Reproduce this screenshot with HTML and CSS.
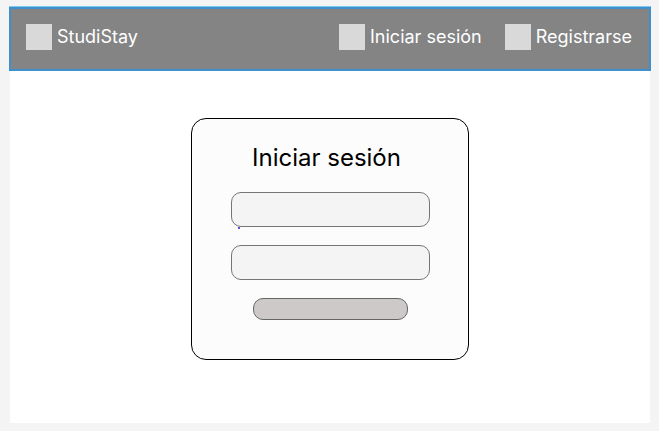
FILE: index.html
```html
<!DOCTYPE html>
<html lang="es">
<head>
<meta charset="utf-8">
<title>StudiStay</title>
<link rel="stylesheet" href="styles.css">
</head>
<body>
<div class="page">
  <header class="topbar">
    <a class="link" href="#"><span class="icon"></span>StudiStay</a>
    <nav class="nav">
      <a class="link" href="#"><span class="icon"></span>Iniciar sesión</a>
      <a class="link" href="#"><span class="icon"></span>Registrarse</a>
    </nav>
  </header>
  <main class="main">
    <form class="card">
      <h1 class="title">Iniciar sesión</h1>
      <div class="field">
        <input class="input" type="text" aria-label="Usuario">
        <span class="dot"></span>
      </div>
      <div class="field">
        <input class="input" type="password" aria-label="Contraseña">
      </div>
      <button class="submit" type="submit" aria-label="Entrar"></button>
    </form>
  </main>
</div>
</body>
</html>
```
FILE: styles.css
```css
* {
  box-sizing: border-box;
}

body {
  margin: 0;
  padding: 7px 8px 8px 9px;
  min-height: 100vh;
  display: flex;
  background: #f4f4f4;
  font-family: Inter, "Liberation Sans", sans-serif;
}

.page {
  flex: 1;
  display: flex;
  flex-direction: column;
  background: linear-gradient(#fff, #fff) center / calc(100% - 2px) 100% no-repeat;
}

.topbar {
  display: flex;
  justify-content: space-between;
  align-items: center;
  height: 64px;
  padding: 0 17px 4px 15px;
  border: 2px solid #3f8fcd;
  background: #848484;
  box-shadow: 0 -1px #7cc8f0;
}

.nav {
  display: flex;
  gap: 23px;
}

.link {
  display: flex;
  align-items: center;
  gap: 5px;
  color: #fff;
  font-size: 18px;
  line-height: 26px;
  text-decoration: none;
}

.icon {
  width: 26px;
  height: 26px;
  background: #d9d9d9;
}

.main {
  flex: 1;
  padding: 47px 0 40px;
}

.card {
  display: flex;
  flex-direction: column;
  align-items: center;
  width: 278px;
  margin: 0 auto;
  padding: 24px 38px 39px 39px;
  border: 1px solid #000;
  border-radius: 15px;
  background: #fcfcfc;
}

.title {
  align-self: flex-start;
  margin: 0 0 19px;
  padding-left: 21px;
  color: #000;
  font-size: 24px;
  font-weight: 400;
  line-height: 30px;
  white-space: nowrap;
}

.field {
  position: relative;
  width: 100%;
  margin-bottom: 18px;
}

.input {
  display: block;
  width: 100%;
  height: 35px;
  padding: 0 10px;
  border: 1px solid #757575;
  border-radius: 10px;
  background: #f4f4f4;
  font: inherit;
}

.dot {
  position: absolute;
  left: 7px;
  top: 100%;
  width: 2px;
  height: 2px;
  border-radius: 1px;
  background: #2a20c8;
}

.submit {
  width: 155px;
  height: 22px;
  padding: 0;
  border: 1px solid #666;
  border-radius: 10px;
  background: #cdc9c9;
}
```
